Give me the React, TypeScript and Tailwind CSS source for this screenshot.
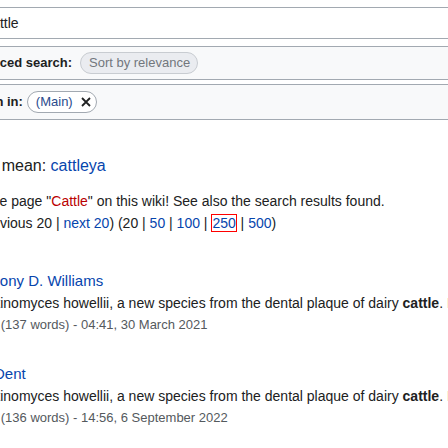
export default function App() {
  return (
    <div className="w-[448px] h-[448px] overflow-hidden bg-white text-[#202122] font-['Liberation_Sans',Arial,sans-serif] pt-[7px]">
      {/* search input */}
      <div className="ml-[-40px] w-[540px] h-[32px] border border-[#a2a9b1] bg-white flex items-center pl-[21px] text-[14px]">
        Cattle
      </div>

      {/* advanced search box */}
      <div className="mt-[7px] ml-[-60px] w-[560px] h-[34px] border-y border-[#a2a9b1] bg-[#f8f9fa] flex items-center pl-[20px] whitespace-nowrap">
        <span className="font-bold text-[13px]">Advanced search:</span>
        <span className="ml-[8px] h-[22px] flex items-center rounded-full border border-[#c8ccd1] bg-[#eaecf0] pl-[8px] pr-[7px] text-[13px] text-[#72777d]">
          Sort by relevance
        </span>
      </div>

      {/* namespace box */}
      <div className="mt-[4px] ml-[-60px] w-[560px] h-[36px] border-y border-[#a2a9b1] bg-[#f8f9fa] flex items-center pl-[20px] whitespace-nowrap">
        <span className="font-bold text-[13px]">Search in:</span>
        <span className="ml-[4px] h-[22px] flex items-center rounded-full border border-[#a2a9b1] bg-white pl-[8px] pr-[5px] text-[13px]">
          <span className="text-[#2a4b8d]">(Main)</span>
          <svg className="ml-[8px]" width="10" height="10" viewBox="0 0 10 10">
            <path d="M1 1 L9 9 M9 1 L1 9" stroke="#202122" strokeWidth="1.8" fill="none" />
          </svg>
        </span>
      </div>

      {/* did you mean */}
      <div className="mt-[34px] ml-[-57px] text-[16px] leading-[24px] whitespace-nowrap">
        Did you mean: <span className="text-[#0645ad]">cattleya</span>
      </div>

      <div className="mt-[12px] text-[14px] leading-[22px] whitespace-nowrap">
        <div className="ml-[-58px]">
          Create the page "<span className="text-[#ba0000]">Cattle</span>" on this wiki! See also the search results found.
        </div>
        <div className="ml-[-59px]">
          View (previous 20 | <span className="text-[#0645ad]">next 20</span>) (20 | <span className="text-[#0645ad]">50</span> |{" "}
          <span className="text-[#0645ad]">100</span> |{" "}
          <span className="text-[#0645ad] border border-[#ff0000]">250</span> |{" "}
          <span className="text-[#0645ad]">500</span>)
        </div>
      </div>

      {/* results */}
      <div className="mt-[36px] ml-[-31px] whitespace-nowrap flex flex-col gap-[27px]">
        <div className="flex flex-col">
          <div className="text-[15px] leading-[22px] text-[#0645ad]">Anthony D. Williams</div>
          <div className="text-[14px] leading-[22px] ml-[11px]">
            Actinomyces howellii, a new species from the dental plaque of dairy <b>cattle</b>. Bacteria
          </div>
          <div className="text-[13px] leading-[22px] text-[#54595d]">1 KB (137 words) - 04:41, 30 March 2021</div>
        </div>
        <div className="flex flex-col">
          <div className="text-[15px] leading-[22px] text-[#0645ad] ml-[25px]">Dent</div>
          <div className="text-[14px] leading-[22px] ml-[11px]">
            Actinomyces howellii, a new species from the dental plaque of dairy <b>cattle</b>. Bacteria
          </div>
          <div className="text-[13px] leading-[22px] text-[#54595d]">1 KB (136 words) - 14:56, 6 September 2022</div>
        </div>
      </div>
    </div>
  );
}
